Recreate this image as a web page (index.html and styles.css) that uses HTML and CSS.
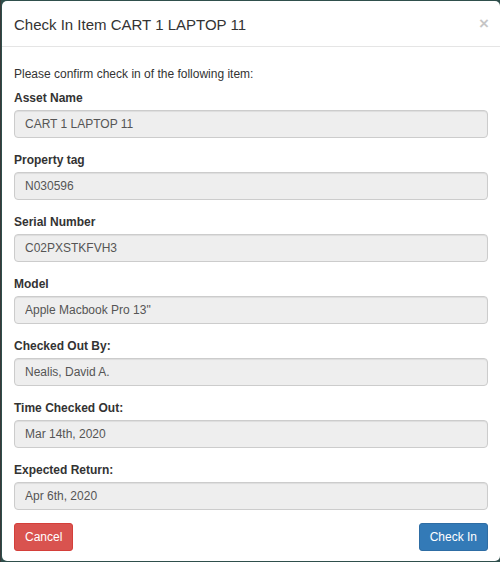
FILE: index.html
```html
<!DOCTYPE html>
<html lang="en">
<head>
  <meta charset="UTF-8" />
  <title>Check In Item</title>
  <link rel="stylesheet" href="styles.css">
</head>
<body>
  <div class="modal">
    <div class="modal-header">
      <h4 class="modal-title">Check In Item CART 1 LAPTOP 11</h4>
      <button class="close" type="button">&times;</button>
    </div>

    <div class="modal-body">
      <p class="intro">Please confirm check in of the following item:</p>

      <div class="form-group">
        <label>Asset Name</label>
        <input class="form-control" type="text" value="CART 1 LAPTOP 11" readonly />
      </div>
      <div class="form-group">
        <label>Property tag</label>
        <input class="form-control" type="text" value="N030596" readonly />
      </div>
      <div class="form-group">
        <label>Serial Number</label>
        <input class="form-control" type="text" value="C02PXSTKFVH3" readonly />
      </div>
      <div class="form-group">
        <label>Model</label>
        <input class="form-control" type="text" value='Apple Macbook Pro 13"' readonly />
      </div>
      <div class="form-group">
        <label>Checked Out By:</label>
        <input class="form-control" type="text" value="Nealis, David A." readonly />
      </div>
      <div class="form-group">
        <label>Time Checked Out:</label>
        <input class="form-control" type="text" value="Mar 14th, 2020" readonly />
      </div>
      <div class="form-group">
        <label>Expected Return:</label>
        <input class="form-control" type="text" value="Apr 6th, 2020" readonly />
      </div>

      <div class="actions">
        <button class="btn btn-danger" type="button">Cancel</button>
        <button class="btn btn-primary" type="button">Check In</button>
      </div>
    </div>
  </div>
</body>
</html>
```

FILE: styles.css
```css
html, body {
  margin: 0;
  padding: 0;
  height: 100%;
  background: #2f4f4c;
  font-family: 'Liberation Sans', Arial, sans-serif;
  color: #333;
}

body {
  border-left: 1px solid #3a3a3a;
  box-sizing: border-box;
  padding-top: 1px;
}

.modal {
  margin-left: 1px;
  height: 560px;
  background: #fff;
  border-radius: 5px;
  box-sizing: border-box;
}

.modal-header {
  display: flex;
  align-items: center;
  justify-content: space-between;
  height: 45px;
  padding: 0 11px 0 12px;
  border-bottom: 1px solid #e5e5e5;
}

.modal-title {
  margin: 2px 0 0;
  font-size: 15px;
  font-weight: normal;
  line-height: 20px;
  color: #333;
}

.close {
  background: none;
  border: none;
  padding: 0;
  font-family: 'Liberation Sans', Arial, sans-serif;
  font-size: 17px;
  font-weight: bold;
  line-height: 1;
  color: #000;
  opacity: 0.22;
  cursor: pointer;
}

.modal-body {
  padding: 18px 12px 0 12px;
}

.intro {
  margin: 0 0 6px;
  font-size: 12px;
  line-height: 18px;
}

.form-group {
  margin-bottom: 13px;
}

label {
  display: block;
  font-size: 12px;
  font-weight: bold;
  line-height: 18px;
  margin-bottom: 3px;
}

.form-control {
  display: block;
  width: 100%;
  height: 28px;
  box-sizing: border-box;
  padding: 4px 10px;
  font-family: 'Liberation Sans', Arial, sans-serif;
  font-size: 12px;
  color: #555;
  background: #eee;
  border: 1px solid #ccc;
  border-radius: 4px;
  box-shadow: inset 0 1px 1px rgba(0,0,0,0.075);
}

.actions {
  display: flex;
  justify-content: space-between;
}

.btn {
  height: 28px;
  padding: 0 10px;
  font-family: 'Liberation Sans', Arial, sans-serif;
  font-size: 12px;
  color: #fff;
  border: 1px solid transparent;
  border-radius: 3px;
  cursor: pointer;
}

.btn-danger {
  background: #d9534f;
  border-color: #d43f3a;
}

.btn-primary {
  background: #337ab7;
  border-color: #2e6da4;
}
```
